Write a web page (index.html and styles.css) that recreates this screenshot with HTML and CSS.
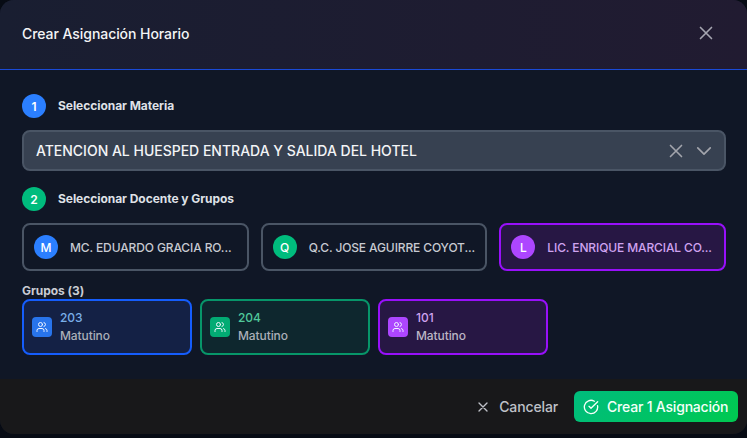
FILE: index.html
```html
<!DOCTYPE html>
<html lang="es">
<head>
<meta charset="utf-8">
<title>Crear Asignación Horario</title>
<link rel="stylesheet" href="styles.css">
</head>
<body>
<svg width="0" height="0" class="defs" aria-hidden="true">
  <symbol id="x" viewBox="0 0 24 24"><path d="M18 6 6 18M6 6l12 12"/></symbol>
  <symbol id="users" viewBox="0 0 24 24"><path d="M16 21v-2a4 4 0 0 0-4-4H6a4 4 0 0 0-4 4v2"/><circle cx="9" cy="7" r="4"/><path d="M22 21v-2a4 4 0 0 0-3-3.870M16 3.130a4 4 0 0 1 0 7.750"/></symbol>
</svg>
<main class="modal">
  <header class="header">
    <h1>Crear Asignación Horario</h1>
    <svg class="icon close"><use href="#x"/></svg>
  </header>
  <section class="body">
    <div class="step"><span class="dot blue">1</span><h2>Seleccionar Materia</h2></div>
    <div class="select">
      <span class="value">ATENCION AL HUESPED ENTRADA Y SALIDA DEL HOTEL</span>
      <svg class="icon clear"><use href="#x"/></svg>
      <svg class="icon chevron" viewBox="0 0 24 24"><path d="m4.500 8.250 7.500 7.500 7.500-7.500"/></svg>
    </div>
    <div class="step"><span class="dot green">2</span><h2>Seleccionar Docente y Grupos</h2></div>
    <div class="teachers">
      <div class="teacher"><span class="dot blue">M</span><span class="name">MC. EDUARDO GRACIA RO...</span></div>
      <div class="teacher"><span class="dot green">Q</span><span class="name">Q.C. JOSE AGUIRRE COYOT...</span></div>
      <div class="teacher selected"><span class="dot purple">L</span><span class="name">LIC. ENRIQUE MARCIAL CO...</span></div>
    </div>
    <h3>Grupos (3)</h3>
    <div class="groups">
      <div class="group g-blue"><span class="badge"><svg class="icon"><use href="#users"/></svg></span><div><div class="num">203</div><div class="shift">Matutino</div></div></div>
      <div class="group g-green"><span class="badge"><svg class="icon"><use href="#users"/></svg></span><div><div class="num">204</div><div class="shift">Matutino</div></div></div>
      <div class="group g-purple"><span class="badge"><svg class="icon"><use href="#users"/></svg></span><div><div class="num">101</div><div class="shift">Matutino</div></div></div>
    </div>
  </section>
  <footer class="footer">
    <div class="cancel"><svg class="icon"><use href="#x"/></svg><span>Cancelar</span></div>
    <div class="create"><svg class="icon" viewBox="0 0 24 24"><path d="M21.801 10A10 10 0 1 1 17 3.335"/><path d="m9 11 3 3L22 4"/></svg><span>Crear 1 Asignación</span></div>
  </footer>
</main>
</body>
</html>
```
FILE: styles.css
```css
* { box-sizing: border-box; }
body { margin: 0; height: 438px; overflow: hidden; background: #070b14; font-family: Inter, "Liberation Sans", sans-serif; color: #e5e7eb; }
h1, h2, h3 { margin: 0; }
.defs { position: absolute; }
.icon { fill: none; stroke: currentColor; stroke-width: 2; stroke-linecap: round; stroke-linejoin: round; flex: none; }
.modal { height: 434px; border-radius: 14px; overflow: hidden; background: #101726; display: flex; flex-direction: column; }
.header { height: 70px; padding: 0 30px 2px 22px; display: flex; align-items: center; justify-content: space-between; background: linear-gradient(90deg, #191e31, #211b31); border-bottom: 1px solid #1a4ad6; }
h1 { font-size: 14px; line-height: 20px; font-weight: 500; letter-spacing: -0.06px; color: #f3f4f6; }
.close { width: 22px; height: 22px; color: #a5a5b0; stroke-width: 1.800; margin-bottom: 1px; }
.body { height: 309px; padding: 24px 21px 0 22px; }
.step { display: flex; align-items: center; gap: 12px; height: 24px; }
.dot { width: 24px; height: 24px; border-radius: 50%; display: flex; align-items: center; justify-content: center; font-size: 12px; font-weight: 500; color: #fff; flex: none; }
.step .dot { font-weight: 600; }
.blue { background: #2b7fff; }
.green { background: #00bc7d; }
.purple { background: #ad46ff; }
h2 { font-size: 12px; line-height: 16px; font-weight: 700; letter-spacing: -0.05px; color: #dfe1e6; }
.select { height: 41px; margin: 12px 0 16px; border: 2px solid #4a5565; border-radius: 8px; background: #374151; display: flex; align-items: center; padding: 0 10px 0 12px; }
.value { flex: 1; font-size: 14px; font-weight: 500; letter-spacing: -0.01px; color: #f3f4f6; white-space: nowrap; }
.clear, .chevron { color: #a3a5ac; stroke-width: 2; }
.clear { width: 22px; height: 22px; margin-right: 7px; stroke-width: 1.800; }
.chevron { width: 20px; height: 20px; }
.teachers { display: grid; grid-template-columns: repeat(3, 1fr); gap: 12px; margin-top: 12px; }
.teacher { height: 48px; border: 2px solid #4a5565; border-radius: 8px; display: flex; align-items: center; padding: 0 10px; gap: 12px; min-width: 0; }
.name { font-size: 12px; font-weight: 500; letter-spacing: -0.12px; color: #c7cad1; white-space: nowrap; }
.selected { border-color: #9810fa; background: #271744; }
.selected .name { color: #cfa3f0; }
h3 { font-size: 12px; line-height: 16px; font-weight: 700; letter-spacing: -0.05px; color: #c9ccd3; margin-top: 12px; }
.groups { display: grid; grid-template-columns: repeat(4, 1fr); gap: 8px; }
.group { height: 56px; border: 2px solid; border-radius: 8px; display: flex; align-items: center; gap: 8px; padding: 0 8px; font-size: 12px; font-weight: 500; line-height: 18px; letter-spacing: -0.1px; }
.num { letter-spacing: -0.05px; }
.badge { width: 20px; height: 20px; border-radius: 4px; display: flex; align-items: center; justify-content: center; color: #f1f5ff; }
.badge .icon { width: 12px; height: 12px; }
.shift { color: #abafb8; }
.g-blue { border-color: #155dfc; background: #142145; }
.g-blue .badge { background: #2874eb; }
.g-blue .num { color: #79aee8; }
.g-green { border-color: #079669; background: #0e272e; }
.g-green .badge { background: #02ab73; }
.g-green .num { color: #50c99b; }
.g-purple { border-color: #9810fa; background: #271744; }
.g-purple .badge { background: #ad46ff; }
.g-purple .num { color: #cfa3f0; }
.g-purple .shift { color: #bbb5c4; }
.footer { height: 55px; background: #18181a; display: flex; justify-content: flex-end; align-items: center; padding: 0 9px 0 0; gap: 16px; font-size: 14px; font-weight: 500; }
.cancel { display: flex; align-items: center; gap: 8px; letter-spacing: -0.13px; color: #bfc1c8; }
.cancel .icon { width: 16px; height: 16px; stroke-width: 2; }
.create { width: 164px; height: 31px; border-radius: 6px; display: flex; align-items: center; padding-left: 9px; gap: 8px; letter-spacing: -0.2px; color: #f4fff9; background: linear-gradient(135deg, #00bc7d, #00c950); white-space: nowrap; }
.create .icon { width: 16px; height: 16px; stroke-width: 2; }
```
